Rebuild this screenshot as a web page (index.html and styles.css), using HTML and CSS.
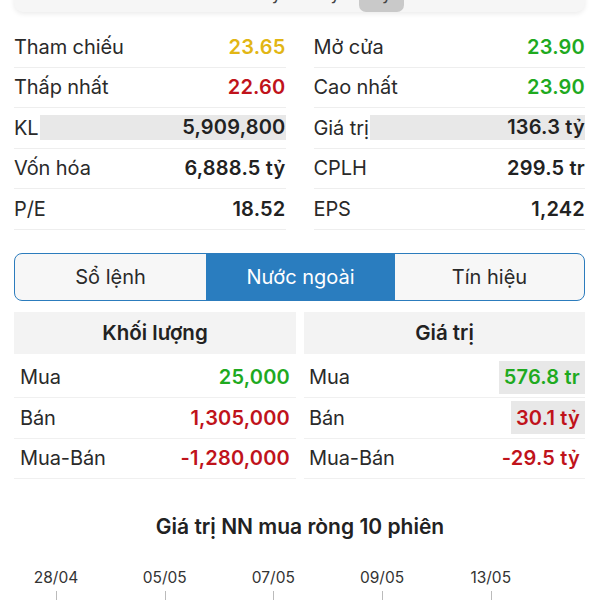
FILE: index.html
```html
<!DOCTYPE html>
<html lang="vi">
<head>
<meta charset="utf-8">
<title>Chi tiết cổ phiếu</title>
<link rel="stylesheet" href="styles.css">
</head>
<body>
<div class="page">
  <div class="periods">
    <span class="period">1d</span>
    <span class="period">1w</span>
    <span class="period">1m</span>
    <span class="period">3m</span>
    <span class="period">1y</span>
    <span class="period">3y</span>
    <span class="period active">5y</span>
    <span class="period-spacer"></span>
    <span class="period icon">⌄</span>
  </div>

  <div class="stats">
    <div class="stat"><span class="label">Tham chiếu</span><span class="val ref">23.65</span></div>
    <div class="stat"><span class="label">Mở cửa</span><span class="val up">23.90</span></div>
    <div class="stat"><span class="label">Thấp nhất</span><span class="val down">22.60</span></div>
    <div class="stat"><span class="label">Cao nhất</span><span class="val up">23.90</span></div>
    <div class="stat"><span class="label">KL</span><span class="val dark fill">5,909,800</span></div>
    <div class="stat"><span class="label">Giá trị</span><span class="val dark fill">136.3 tỷ</span></div>
    <div class="stat"><span class="label">Vốn hóa</span><span class="val dark">6,888.5 tỷ</span></div>
    <div class="stat"><span class="label">CPLH</span><span class="val dark">299.5 tr</span></div>
    <div class="stat"><span class="label">P/E</span><span class="val dark">18.52</span></div>
    <div class="stat"><span class="label">EPS</span><span class="val dark">1,242</span></div>
  </div>

  <div class="segment">
    <div class="seg">Sổ lệnh</div>
    <div class="seg on">Nước ngoài</div>
    <div class="seg">Tín hiệu</div>
  </div>

  <div class="foreign">
    <div class="fcol">
      <div class="fhead">Khối lượng</div>
      <div class="frow"><span class="label">Mua</span><span class="val up">25,000</span></div>
      <div class="frow"><span class="label">Bán</span><span class="val down">1,305,000</span></div>
      <div class="frow"><span class="label">Mua-Bán</span><span class="val down">-1,280,000</span></div>
    </div>
    <div class="fcol">
      <div class="fhead">Giá trị</div>
      <div class="frow"><span class="label">Mua</span><span class="val up chip">576.8 tr</span></div>
      <div class="frow"><span class="label">Bán</span><span class="val down chip">30.1 tỷ</span></div>
      <div class="frow"><span class="label">Mua-Bán</span><span class="val down">-29.5 tỷ</span></div>
    </div>
  </div>

  <h2 class="chart-title">Giá trị NN mua ròng 10 phiên</h2>
  <div class="axis">
    <div class="tick"><span>28/04</span><i></i></div>
    <div class="tick"><span>05/05</span><i></i></div>
    <div class="tick"><span>07/05</span><i></i></div>
    <div class="tick"><span>09/05</span><i></i></div>
    <div class="tick"><span>13/05</span><i></i></div>
  </div>
</div>
</body>
</html>
```
FILE: styles.css
```css
* { box-sizing: border-box; }
html, body { margin: 0; padding: 0; background: #fff; }
body {
  font-family: Inter, "Noto Sans", "Liberation Sans", sans-serif;
  color: #222;
  overflow: hidden;
  width: 600px;
  height: 600px;
}
.page { padding: 0 14px 0 14px; }

.periods {
  display: flex;
  align-items: flex-end;
  height: 40px;
  margin-top: -28px;
  margin-right: 1px;
  padding: 0 6px;
  background: #f6f6f6;
  border-radius: 0 0 9px 9px;
  box-shadow: 0 2px 5px rgba(0,0,0,0.08);
}
.period {
  width: 50px;
  margin-right: 7px;
  height: 40px;
  display: flex;
  align-items: flex-end;
  justify-content: center;
  padding-bottom: 9px;
  font-size: 17px;
  color: #444;
  line-height: 1;
}
.period.active {
  background: #c9c9c9;
  border-radius: 0 0 7px 7px;
  width: 45px;
  margin-left: -3px;
}
.period-spacer { flex: 1; }
.period.icon { width: 30px; margin-right: 6px; font-size: 14px; padding-bottom: 10px; }

.stats {
  display: grid;
  grid-template-columns: 1fr 1fr;
  column-gap: 28px;
  margin-top: 15px;
  margin-right: 1px;
}
.stat {
  display: flex;
  align-items: center;
  justify-content: space-between;
  height: 40.5px;
  border-bottom: 1px solid #eeeeee;
}
.label {
  font-size: 20px;
  color: #2a2a2a;
  white-space: nowrap;
  letter-spacing: -0.1px;
}
.val {
  font-size: 20px;
  font-weight: 600;
  white-space: nowrap;
  letter-spacing: 0.2px;
}
.val.fill {
  flex: 1;
  text-align: right;
  background: #e8e8e8;
  align-self: stretch;
  margin: 7px 0 8px 1px;
  display: flex;
  align-items: center;
  justify-content: flex-end;
}
.ref { color: #e2b614; }
.up { color: #1faa1f; }
.down { color: #c0131b; }
.dark { color: #222; }

.segment {
  display: grid;
  grid-template-columns: 191px 189px 1fr;
  height: 48px;
  margin-top: 23px;
  margin-right: 1px;
  border: 1.5px solid #2c7cbd;
  border-radius: 8px;
  overflow: hidden;
  background: #f7f7f7;
}
.seg {
  display: flex;
  align-items: center;
  justify-content: center;
  font-size: 20px;
  color: #2a2a2a;
}
.seg.on { background: #2a7dbf; color: #fff; }

.foreign {
  display: grid;
  grid-template-columns: 282px 1fr;
  column-gap: 8px;
  margin-top: 11px;
  margin-right: 1px;
}
.fhead {
  height: 42px;
  display: flex;
  align-items: center;
  justify-content: center;
  background: #f3f3f3;
  font-size: 20.5px;
  font-weight: 600;
  color: #222;
  margin-bottom: 4px;
}
.frow {
  display: flex;
  align-items: center;
  justify-content: space-between;
  height: 40.5px;
  padding: 0 6px;
  border-bottom: 1px solid #f0f0f0;
}
.fcol + .fcol .frow { padding: 0 5px 0 5px; }
.val.chip {
  background: #e8e8e8;
  height: 33px;
  display: flex;
  align-items: center;
  padding: 0 5px 0 5px;
  margin-right: -5px;
}

.chart-title {
  margin: 35px 0 0;
  text-align: center;
  font-size: 21px;
  font-weight: 600;
  color: #222;
  line-height: 26px;
}
.axis {
  display: flex;
  margin-top: 29px;
  padding-left: 14px;
}
.tick {
  width: 108.7px;
  display: flex;
  flex-direction: column;
  align-items: flex-start;
}
.tick span {
  display: block;
  width: 56px;
  text-align: center;
  font-size: 15.5px;
  color: #333;
  line-height: 18px;
}
.tick i {
  display: block;
  width: 1px;
  height: 14px;
  background: #bbb;
  margin: 4px 0 0 28px;
}
```
